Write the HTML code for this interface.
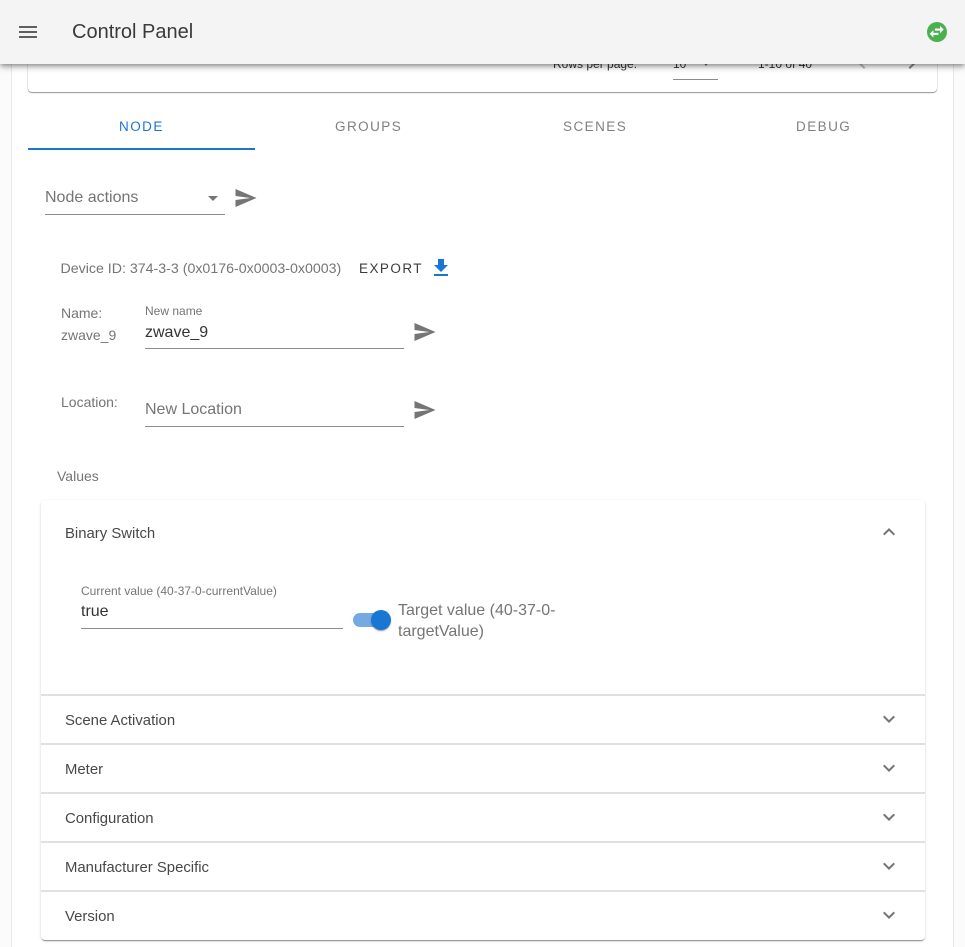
<!DOCTYPE html>
<html>
<head>
<meta charset="utf-8">
<style>
html,body{margin:0;padding:0;width:965px;height:947px;overflow:hidden;background:#fff;font-family:"Liberation Sans",sans-serif;}
.t{position:absolute;white-space:nowrap;line-height:1;}
.l{position:absolute;height:1px;background:#8c8c8c;}
svg{position:absolute;display:block;}
.div{position:absolute;left:41px;width:884px;height:2px;background:#e0e0e0;}
.h{font-size:14.9px;color:#484848;left:65px;}
.tab{top:120px;font-size:13.5px;letter-spacing:1.45px;color:#808080;}
</style>
</head>
<body>
<div style="position:absolute;left:0;top:0;width:11px;height:947px;background:#fbfbfb;border-right:1px solid #e8e8e8;"></div>
<div style="position:absolute;left:953px;top:0;width:12px;height:947px;background:#fbfbfb;border-left:1px solid #e8e8e8;box-sizing:border-box;"></div>

<!-- top card -->
<div style="position:absolute;left:28px;top:40px;width:909px;height:52px;background:#fff;border-radius:4px;box-shadow:0 1px 1px rgba(0,0,0,.4),0 0 1px rgba(0,0,0,.22);"></div>
<div class="t" style="left:553px;top:58px;font-size:12px;color:#333;">Rows per page:</div>
<div class="t" style="left:673px;top:58px;font-size:12px;color:#333;">10</div>
<svg style="left:694px;top:51px" width="24" height="24" viewBox="0 0 24 24"><path fill="#666" d="M9 11l3 4 3-4z"/></svg>
<div class="l" style="left:673px;top:79px;width:45px;"></div>
<div class="t" style="left:758px;top:58px;font-size:12px;color:#333;">1-10 of 40</div>
<svg style="left:850px;top:51px" width="24" height="24" viewBox="0 0 24 24"><path fill="#bdbdbd" d="M15.41 7.41L14 6l-6 6 6 6 1.41-1.41L10.83 12z"/></svg>
<svg style="left:900px;top:51px" width="24" height="24" viewBox="0 0 24 24"><path fill="#888" d="M10 6L8.59 7.41 13.17 12l-4.58 4.59L10 18l6-6z"/></svg>

<!-- app bar -->
<div style="position:absolute;left:0;top:0;width:965px;height:64px;background:#f4f4f4;box-shadow:0 2px 4px -1px rgba(0,0,0,.3),0 4px 5px 0 rgba(0,0,0,.16),0 1px 10px 0 rgba(0,0,0,.12);"></div>
<svg style="left:16px;top:20px" width="24" height="24" viewBox="0 0 24 24"><path fill="#5f5f5f" d="M3 18h18v-2H3v2zm0-5h18v-2H3v2zm0-7v2h18V6H3z"/></svg>
<div class="t" style="left:72px;top:22px;font-size:20px;color:#3a3a3a;">Control Panel</div>
<div style="position:absolute;left:927px;top:22px;width:20px;height:20px;border-radius:50%;background:#4caf50;"></div>
<svg style="left:928.3px;top:23.3px" width="17.4" height="17.4" viewBox="0 0 24 24"><path fill="#fff" stroke="#fff" stroke-width=".9" d="M6.99 11L3 15l3.99 4v-3H14v-2H6.99v-3zM21 9l-3.99-4v3H10v2h7.01v3L21 9z"/></svg>

<!-- tabs -->
<div class="t tab" style="left:119px;color:#1976d2;">NODE</div>
<div class="t tab" style="left:335px;">GROUPS</div>
<div class="t tab" style="left:563px;">SCENES</div>
<div class="t tab" style="left:796px;">DEBUG</div>
<div style="position:absolute;left:28px;top:148px;width:227px;height:2px;background:#1976d2;"></div>

<!-- node actions -->
<div class="t" style="left:45px;top:190px;font-size:16px;color:#757575;">Node actions</div>
<svg style="left:201px;top:186px" width="24" height="24" viewBox="0 0 24 24"><path fill="#757575" d="M7 10l5 5 5-5z"/></svg>
<div class="l" style="left:45px;top:214px;width:180px;"></div>
<svg style="left:231.5px;top:186px" width="27" height="24" viewBox="0 0 24 24"><path fill="#757575" d="M2.01 21L23 12 2.01 3 2 10l15 2-15 2z"/></svg>

<!-- device -->
<div class="t" style="left:60.5px;top:262px;font-size:14.2px;color:#757575;">Device ID: 374-3-3 (0x0176-0x0003-0x0003)</div>
<div class="t" style="left:359px;top:262px;font-size:13.5px;letter-spacing:1.45px;color:#3c3c3c;">EXPORT</div>
<svg style="left:429px;top:256px" width="24" height="24" viewBox="0 0 24 24"><path fill="#1976d2" d="M19 9h-4V3H9v6H5l7 7 7-7zM5 18v2h14v-2H5z"/></svg>

<!-- name -->
<div class="t" style="left:61px;top:306px;font-size:14px;color:#757575;">Name:</div>
<div class="t" style="left:61px;top:328px;font-size:14px;color:#757575;">zwave_9</div>
<div class="t" style="left:145px;top:305px;font-size:12px;color:#757575;">New name</div>
<div class="t" style="left:145px;top:325px;font-size:16px;color:#333;">zwave_9</div>
<div class="l" style="left:145px;top:348px;width:259px;"></div>
<svg style="left:410.5px;top:320px" width="27" height="24" viewBox="0 0 24 24"><path fill="#757575" d="M2.01 21L23 12 2.01 3 2 10l15 2-15 2z"/></svg>

<!-- location -->
<div class="t" style="left:61px;top:395px;font-size:14px;color:#757575;">Location:</div>
<div class="t" style="left:145px;top:402px;font-size:16px;color:#757575;">New Location</div>
<div class="l" style="left:145px;top:426px;width:259px;"></div>
<svg style="left:410.5px;top:398px" width="27" height="24" viewBox="0 0 24 24"><path fill="#757575" d="M2.01 21L23 12 2.01 3 2 10l15 2-15 2z"/></svg>

<div class="t" style="left:57px;top:469px;font-size:14px;color:#757575;">Values</div>

<!-- accordion -->
<div style="position:absolute;left:41px;top:500px;width:884px;height:440px;background:#fff;border-radius:4px;box-shadow:0 2px 1px -1px rgba(0,0,0,.3),0 1px 1px rgba(0,0,0,.14),0 1px 3px rgba(0,0,0,.12);"></div>
<div class="t h" style="top:527px;">Binary Switch</div>
<svg style="left:877px;top:520px" width="24" height="24" viewBox="0 0 24 24"><path fill="#757575" d="M7.41 15.41L12 10.83l4.59 4.58L18 14l-6-6-6 6z"/></svg>

<div class="t" style="left:81px;top:585px;font-size:12px;color:#757575;">Current value (40-37-0-currentValue)</div>
<div class="t" style="left:81px;top:604px;font-size:16px;color:#333;">true</div>
<div class="l" style="left:81px;top:628px;width:262px;"></div>

<div style="position:absolute;left:353px;top:613px;width:34px;height:14px;border-radius:7px;background:#75a9e2;"></div>
<div style="position:absolute;left:371px;top:610px;width:20px;height:20px;border-radius:50%;background:#1976d2;box-shadow:0 2px 1px -1px rgba(0,0,0,.2),0 1px 1px rgba(0,0,0,.14),0 1px 3px rgba(0,0,0,.12);"></div>
<div class="t" style="left:398px;top:600px;font-size:16px;color:#757575;line-height:21px;white-space:normal;width:190px;">Target value (40-37-0-<br>targetValue)</div>

<div class="div" style="top:694px;"></div>
<div class="t h" style="top:714px;">Scene Activation</div>
<svg style="left:877px;top:707px" width="24" height="24" viewBox="0 0 24 24"><path fill="#757575" d="M16.59 8.59L12 13.17 7.41 8.59 6 10l6 6 6-6z"/></svg>
<div class="div" style="top:743px;"></div>
<div class="t h" style="top:763px;">Meter</div>
<svg style="left:877px;top:756px" width="24" height="24" viewBox="0 0 24 24"><path fill="#757575" d="M16.59 8.59L12 13.17 7.41 8.59 6 10l6 6 6-6z"/></svg>
<div class="div" style="top:792px;"></div>
<div class="t h" style="top:812px;">Configuration</div>
<svg style="left:877px;top:805px" width="24" height="24" viewBox="0 0 24 24"><path fill="#757575" d="M16.59 8.59L12 13.17 7.41 8.59 6 10l6 6 6-6z"/></svg>
<div class="div" style="top:841px;"></div>
<div class="t h" style="top:861px;">Manufacturer Specific</div>
<svg style="left:877px;top:854px" width="24" height="24" viewBox="0 0 24 24"><path fill="#757575" d="M16.59 8.59L12 13.17 7.41 8.59 6 10l6 6 6-6z"/></svg>
<div class="div" style="top:890px;"></div>
<div class="t h" style="top:910px;">Version</div>
<svg style="left:877px;top:903px" width="24" height="24" viewBox="0 0 24 24"><path fill="#757575" d="M16.59 8.59L12 13.17 7.41 8.59 6 10l6 6 6-6z"/></svg>
</body>
</html>
